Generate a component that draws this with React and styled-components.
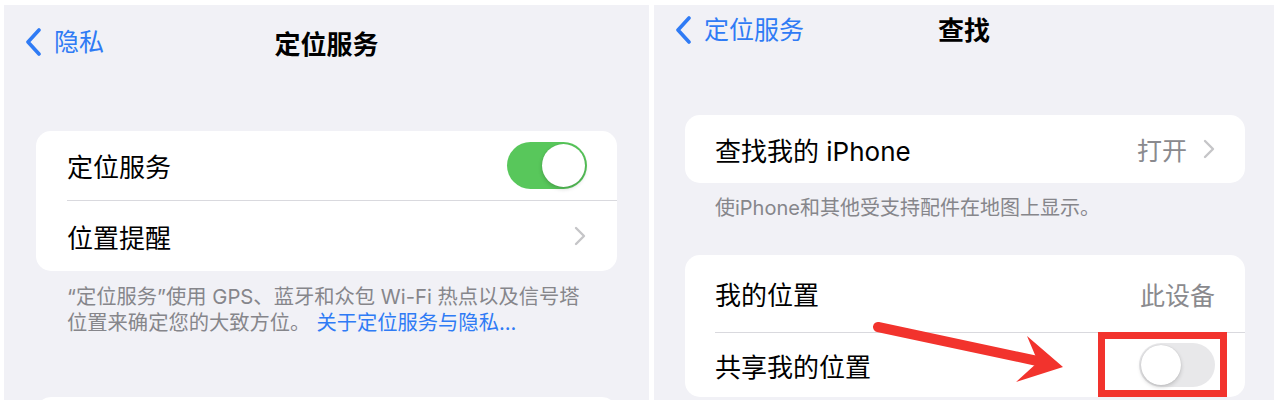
import React from 'react';
import styled, { createGlobalStyle } from 'styled-components';

const GlobalStyle = createGlobalStyle`
  html, body {
    margin: 0;
    padding: 0;
    background: #ffffff;
  }
  body {
    font-family: "Inter", "Noto Sans CJK SC", "Noto Sans", sans-serif;
    color: #000;
  }
`;

const Page = styled.div`
  display: flex;
  gap: 5px;
  padding: 5px 0 0 4px;
  height: 395px;
  overflow: hidden;
`;

const Panel = styled.div`
  position: relative;
  width: ${(p) => p.width}px;
  height: 395px;
  background: #f1f1f6;
  overflow: hidden;
  flex-shrink: 0;
`;

const NavBar = styled.div`
  position: relative;
  height: ${(p) => p.height}px;
  display: flex;
  align-items: center;
  padding-left: 21px;
`;

const BackLink = styled.div`
  display: flex;
  align-items: center;
  gap: 12px;
  color: #2f7bf5;
  font-size: 25px;
  line-height: 1;
`;

const NavTitle = styled.div`
  position: absolute;
  left: 0;
  right: 0;
  top: 0;
  bottom: ${(p) => p.lift || 0}px;
  display: flex;
  align-items: center;
  justify-content: center;
  font-size: 26px;
  font-weight: 700;
  pointer-events: none;
`;

const Card = styled.div`
  margin: ${(p) => p.top}px ${(p) => p.right}px 0 ${(p) => p.left}px;
  background: #ffffff;
  border-radius: 15px;
  padding-left: ${(p) => p.pad}px;
`;

const Row = styled.div`
  position: relative;
  height: ${(p) => p.height}px;
  display: flex;
  align-items: center;
  justify-content: space-between;
  padding-right: ${(p) => p.pad}px;
  font-size: 26px;
  border-top: ${(p) => (p.divider ? '1px solid #d9d9de' : 'none')};
`;

const Value = styled.div`
  display: flex;
  align-items: center;
  gap: 16px;
  color: #8a8a8e;
  font-size: 25px;
`;

const Footer = styled.div`
  padding: ${(p) => p.top}px 0 0 ${(p) => p.left}px;
  max-width: ${(p) => p.max}px;
  color: #86868b;
  font-size: ${(p) => p.size}px;
  line-height: 26px;
`;

const FooterLink = styled.span`
  color: #2f7bf5;
  padding-left: 6px;
`;

const Toggle = styled.div`
  position: relative;
  width: ${(p) => p.w}px;
  height: ${(p) => p.h}px;
  border-radius: ${(p) => p.h / 2}px;
  background: ${(p) => (p.on ? '#58c75b' : '#e8e8ea')};
  flex-shrink: 0;

  &::after {
    content: '';
    position: absolute;
    top: 2px;
    left: ${(p) => (p.on ? p.w - p.h + 2 : 2)}px;
    width: ${(p) => p.h - 4}px;
    height: ${(p) => p.h - 4}px;
    border-radius: 50%;
    background: #ffffff;
    box-shadow: 0 2px 4px rgba(0, 0, 0, 0.18), 0 0 1px rgba(0, 0, 0, 0.15);
  }
`;

const Highlight = styled.div`
  position: relative;
  display: flex;
`;

const RedBox = styled.div`
  position: absolute;
  left: -41px;
  right: -12px;
  top: -11px;
  bottom: -10px;
  border: 7px solid #f2332d;
`;

const ArrowSvg = styled.svg`
  position: absolute;
  left: 216px;
  top: 315px;
  width: 200px;
  height: 70px;
`;

function BackChevron() {
  return (
    <svg width="17" height="28" viewBox="0 0 17 28">
      <path d="M14 2 L3 14 L14 26" fill="none" stroke="#2f7bf5" strokeWidth="3.6" strokeLinecap="round" strokeLinejoin="round" />
    </svg>
  );
}

function RowChevron() {
  return (
    <svg width="12" height="20" viewBox="0 0 12 20">
      <path d="M2 2 L10 10 L2 18" fill="none" stroke="#c5c5c8" strokeWidth="2.4" strokeLinecap="round" strokeLinejoin="round" />
    </svg>
  );
}

export default function App() {
  return (
    <>
      <GlobalStyle />
      <Page>
        <Panel width={645}>
          <NavBar height={74}>
            <BackLink>
              <BackChevron />
              隐私
            </BackLink>
            <NavTitle>定位服务</NavTitle>
          </NavBar>
          <Card top={52} left={32} right={32} pad={31}>
            <Row height={69} pad={30}>
              定位服务
              <Toggle on w={80} h={47} />
            </Row>
            <Row height={70} pad={31} divider>
              位置提醒
              <RowChevron />
            </Row>
          </Card>
          <Footer top={13} left={63} max={522} size={20.3}>
            “定位服务”使用 GPS、蓝牙和众包 Wi-Fi 热点以及信号塔位置来确定您的大致方位。
            <FooterLink>关于定位服务与隐私...</FooterLink>
          </Footer>
          <Card top={61} left={32} right={32} pad={31}>
            <Row height={60} pad={30} />
          </Card>
        </Panel>

        <Panel width={620}>
          <NavBar height={50}>
            <BackLink>
              <BackChevron />
              定位服务
            </BackLink>
            <NavTitle lift={4}>查找</NavTitle>
          </NavBar>
          <Card top={60} left={31} right={29} pad={30}>
            <Row height={68} pad={30}>
              查找我的 iPhone
              <Value>
                打开
                <RowChevron />
              </Value>
            </Row>
          </Card>
          <Footer top={12} left={61} max={560} size={20}>
            使iPhone和其他受支持配件在地图上显示。
          </Footer>
          <Card top={34} left={31} right={29} pad={30}>
            <Row height={77} pad={30}>
              我的位置
              <Value>此设备</Value>
            </Row>
            <Row height={64} pad={30} divider>
              共享我的位置
              <Highlight>
                <Toggle w={76} h={44} />
                <RedBox />
              </Highlight>
            </Row>
          </Card>
          <ArrowSvg viewBox="0 0 200 70">
            <line x1="8" y1="7" x2="172" y2="42" stroke="#f2332d" strokeWidth="10" strokeLinecap="round" />
            <polygon points="157,16 193,47 146,62 168,42" fill="#f2332d" />
          </ArrowSvg>
        </Panel>
      </Page>
    </>
  );
}
